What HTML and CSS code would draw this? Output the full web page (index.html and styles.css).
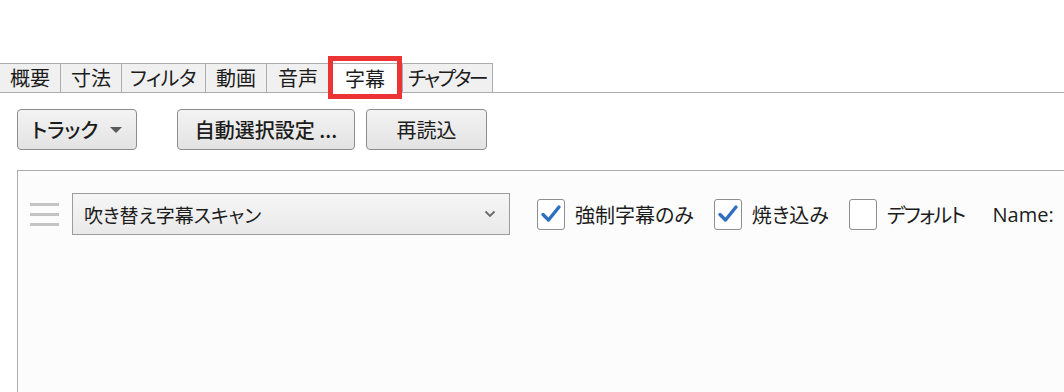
FILE: index.html
```html
<!DOCTYPE html>
<html lang="ja">
  <head>
    <meta charset="UTF-8" />
    <meta name="viewport" content="width=device-width, initial-scale=1.0" />
    <title>字幕</title>
    <link rel="stylesheet" href="styles.css">
  </head>
  <body>
    <div class="tabs">
      <div class="tab">概要</div>
      <div class="tab">寸法</div>
      <div class="tab tight">フィルタ</div>
      <div class="tab">動画</div>
      <div class="tab wide">音声</div>
      <div class="tab active">字幕</div>
      <div class="tab last">チャプター</div>
    </div>

    <div class="content">
      <div class="toolbar">
        <button class="btn btn-track">トラック <span class="caret"></span></button>
        <button class="btn btn-auto">自動選択設定 ...</button>
        <button class="btn btn-reload">再読込</button>
      </div>

      <div class="panel">
        <div class="track-row">
          <div class="handle">
            <span></span><span></span><span></span>
          </div>
          <div class="combo">
            <span class="combo-text">吹き替え字幕スキャン</span>
            <svg class="chevron" width="12" height="8" viewBox="0 0 12 8">
              <path d="M1.5 1.5 L6 6 L10.5 1.5" fill="none" stroke="#6a6a6a" stroke-width="1.8" />
            </svg>
          </div>
          <label class="check">
            <span class="box checked">
              <svg width="22" height="20" viewBox="0 0 22 20">
                <path d="M3 10.5 L8.5 16 L19 3" fill="none" stroke="#2f6fbf" stroke-width="3.4" stroke-linecap="round" stroke-linejoin="round" />
              </svg>
            </span>
            強制字幕のみ
          </label>
          <label class="check">
            <span class="box checked">
              <svg width="22" height="20" viewBox="0 0 22 20">
                <path d="M3 10.5 L8.5 16 L19 3" fill="none" stroke="#2f6fbf" stroke-width="3.4" stroke-linecap="round" stroke-linejoin="round" />
              </svg>
            </span>
            焼き込み
          </label>
          <label class="check">
            <span class="box"></span>
            <span class="narrow">デフォルト</span>
          </label>
          <span class="name-label">Name:</span>
        </div>
      </div>
    </div>
  </body>
</html>
```

FILE: styles.css
```css
body {
  margin: 0;
  font-family: "Noto Sans CJK JP", "Noto Sans", sans-serif;
  font-feature-settings: "palt";
  color: #1c1c1c;
  background-color: #ffffff;
  overflow: hidden;
}
.tabs {
  display: flex;
  margin-top: 63px;
  height: 29px;
  border-bottom: 1px solid #acacac;
}
.tab {
  position: relative;
  display: flex;
  align-items: center;
  justify-content: center;
  padding: 0 10px;
  font-size: 20px;
  line-height: 1;
  white-space: nowrap;
  background-color: #f0f0f0;
  border-top: 1px solid #acacac;
  border-left: 1px solid #acacac;
}
.tab:first-child {
  border-left: none;
}
.tab.tight {
  padding: 0 9px 0 8px;
  letter-spacing: -0.5px;
}
.tab.wide {
  padding: 0 10px 0 11px;
}
.tab.last {
  border-right: 1px solid #acacac;
  padding: 0 6px 0 5px;
  letter-spacing: -2.3px;
}
.tab.active {
  background-color: #ffffff;
  margin-bottom: -1px;
  padding: 0 17px 0 16px;
}
.tab.active::after {
  content: "";
  position: absolute;
  top: -8px;
  bottom: -6px;
  left: -1px;
  right: 0;
  border: 5px solid #ec3434;
}
.content {
  padding: 16px 0 0 17px;
}
.toolbar {
  display: flex;
  gap: 11px;
}
.btn {
  height: 41px;
  font-family: inherit;
  font-feature-settings: "palt";
  font-size: 20px;
  font-weight: 500;
  white-space: nowrap;
  color: #1c1c1c;
  background: linear-gradient(#f3f3f3, #e3e3e3);
  border: 1px solid #8c8c8c;
  border-radius: 4px;
  padding: 0 10px;
  display: flex;
  align-items: center;
  justify-content: center;
  gap: 12px;
}
.btn-track {
  width: 120px;
  margin-right: 29px;
}
.btn-auto {
  width: 178px;
}
.btn-reload {
  width: 121px;
  font-weight: 400;
}
.caret {
  width: 0;
  height: 0;
  border-left: 6px solid transparent;
  border-right: 6px solid transparent;
  border-top: 6px solid #5a5a5a;
}
.panel {
  margin-top: 20px;
  height: 240px;
  border-top: 1px solid #acacac;
  border-left: 1px solid #acacac;
  background-color: #fcfcfc;
}
.track-row {
  display: flex;
  align-items: center;
  padding: 22px 0 0 12px;
}
.handle {
  display: flex;
  flex-direction: column;
  gap: 7px;
  width: 29px;
  margin-right: 13px;
}
.handle span {
  height: 3px;
  background-color: #c4c4c4;
}
.combo {
  width: 438px;
  height: 42px;
  box-sizing: border-box;
  border: 1px solid #9c9c9c;
  background: linear-gradient(#f6f6f6, #e9e9e9);
  display: flex;
  align-items: center;
  justify-content: space-between;
  padding: 0 13px 0 11px;
  font-size: 19px;
  margin-right: 27px;
}
.check {
  display: flex;
  align-items: center;
  gap: 10px;
  font-size: 20px;
  margin-right: 20px;
}
.check .narrow {
  letter-spacing: -1.5px;
}
.box {
  width: 28px;
  height: 31px;
  box-sizing: border-box;
  border: 1px solid #8e8e8e;
  border-radius: 3px;
  background-color: #ffffff;
  display: flex;
  align-items: center;
  justify-content: center;
}
.name-label {
  font-family: "Open Sans", "Noto Sans", sans-serif;
  font-size: 20px;
  margin-left: 8px;
}
```
